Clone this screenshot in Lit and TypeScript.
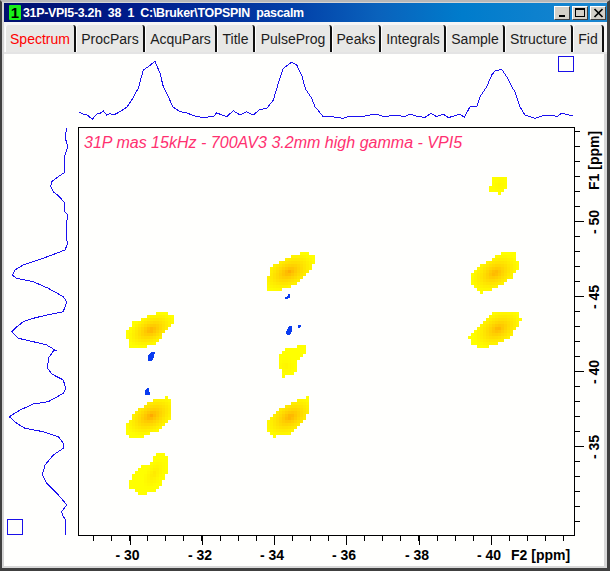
import { LitElement, html, css, svg } from "lit";
import { customElement } from "lit/decorators.js";

const TABS: [string, number][] = [
  ["Spectrum", 71], ["ProcPars", 69], ["AcquPars", 72], ["Title", 38], ["PulseProg", 77],
  ["Peaks", 49], ["Integrals", 65], ["Sample", 59], ["Structure", 68], ["Fid", 31],
];

type P = [number, number];
const z = (pts: number[][], dx: number, dy: number, s = 3) =>
  pts.map(([x, y]) => `${(x / s + dx).toFixed(1)},${(y / s + dy).toFixed(1)}`).join(" ");

const TOP =
  z([[237,337],[250,342],[262,345],[277,358],[290,342],[300,340],[310,333],[320,345],[330,340],[340,345],[355,338],[380,322],[395,300],[415,265],[430,210],[445,200],[465,184],[480,220],[490,260],[505,290],[518,320],[540,335],[560,338],[575,345],[590,350],[610,352],[640,350],[650,338],[665,345],[680,350],[700,332],[720,345],[740,335],[760,345],[780,328],[800,326],[820,300],[835,250],[850,205],[875,186],[890,195],[905,225],[915,262]], 0, 0) +
  " " +
  z([[0,265],[20,295],[30,320],[55,350],[80,350],[115,355],[130,350],[160,350],[180,348],[210,342],[240,350],[270,345],[300,350],[315,342],[340,350],[360,352],[378,340],[395,350],[415,342],[430,353],[465,342],[478,352],[495,320],[515,320],[525,290],[545,260],[560,225],[570,213],[590,208],[605,230],[620,260],[630,275],[645,320],[660,345],[690,355],[715,347],[740,345],[755,350],[770,340],[805,348]], 305, 0);

const LEFT =
  z([[200,10],[195,35],[203,65],[195,90],[193,143],[175,155],[155,170],[152,185],[160,200],[175,212],[193,232],[195,260],[203,270],[200,290],[200,345],[203,355],[195,375],[150,392],[115,405],[70,420],[45,435],[37,450],[50,460],[100,470],[145,490],[190,515],[200,530],[190,560],[140,570],[100,580],[70,590],[45,610],[35,620],[55,640],[100,650],[140,660],[165,675]], 0, 125) +
  " " +
  z([[162,0],[145,25],[143,55],[155,72],[190,90],[197,115],[190,130],[145,155],[100,162],[60,180],[28,200],[50,220],[75,235],[130,245],[175,260],[190,280],[190,295],[160,315],[135,345],[127,375],[140,400],[180,440],[200,465],[185,485],[190,500],[197,510],[197,555]], 0, 350);

interface Blob { pts: P[]; c: P; rx: number; ry: number; rot: number; peak: number; }
const BLOBS: Blob[] = [
  { pts: [[127,332],[133,322],[147,317],[160,312],[166,312],[175,318],[173,324],[163,335],[157,343],[143,348],[128,347]], c: [151,330], rx: 25, ry: 15, rot: -25, peak: 165 },
  { pts: [[125,426],[137,410],[152,401],[167,397],[171,400],[171,417],[160,430],[143,437],[128,437]], c: [151,416], rx: 27, ry: 17, rot: -30, peak: 160 },
  { pts: [[129,483],[132,476],[142,465],[147,467],[157,453],[169,455],[168,473],[157,490],[142,495],[130,488]], c: [154,474], rx: 17, ry: 9, rot: -60, peak: 228 },
  { pts: [[267,278],[273,265],[293,255],[305,252],[315,256],[312,270],[300,282],[282,290],[268,292]], c: [289,272], rx: 28, ry: 17, rot: -25, peak: 165 },
  { pts: [[280,355],[283,350],[295,347],[305,345],[305,352],[297,362],[295,375],[282,377],[280,367]], c: [286,366], rx: 9, ry: 9, rot: 0, peak: 240 },
  { pts: [[267,423],[275,412],[293,402],[309,397],[310,410],[303,423],[293,433],[273,437],[267,430]], c: [290,417], rx: 27, ry: 17, rot: -30, peak: 165 },
  { pts: [[489,192],[493,178],[507,177],[508,187],[500,194]], c: [500,185], rx: 9, ry: 9, rot: 0, peak: 245 },
  { pts: [[470,275],[480,265],[503,253],[515,253],[519,267],[513,277],[497,287],[482,293],[477,288],[470,282]], c: [495,273], rx: 26, ry: 17, rot: -28, peak: 170 },
  { pts: [[469,336],[480,325],[493,312],[517,312],[521,320],[510,338],[488,347],[477,347],[470,343]], c: [498,329], rx: 26, ry: 17, rot: -28, peak: 170 },
];

const inside = (x: number, y: number, pts: P[]) => {
  let r = false;
  for (let i = 0, j = pts.length - 1; i < pts.length; j = i++) {
    const [xi, yi] = pts[i], [xj, yj] = pts[j];
    if (yi > y !== yj > y && x < ((xj - xi) * (y - yi)) / (yj - yi) + xi) r = !r;
  }
  return r;
};

const CELL = 3;
const cells = (b: Blob) => {
  const xs = b.pts.map((p) => p[0]), ys = b.pts.map((p) => p[1]);
  const out: { x: number; y: number; g: number }[] = [];
  const a = (b.rot * Math.PI) / 180;
  for (let y = Math.floor(Math.min(...ys) / CELL) * CELL; y < Math.max(...ys); y += CELL) {
    for (let x = Math.floor(Math.min(...xs) / CELL) * CELL; x < Math.max(...xs); x += CELL) {
      const cx = x + CELL / 2, cy = y + CELL / 2;
      if (!inside(cx, cy, b.pts)) continue;
      const dx = cx - b.c[0], dy = cy - b.c[1];
      const u = dx * Math.cos(a) + dy * Math.sin(a);
      const v = -dx * Math.sin(a) + dy * Math.cos(a);
      const t = Math.min(1, Math.hypot(u / b.rx, v / b.ry));
      out.push({ x, y, g: Math.round(b.peak + (255 - b.peak) * Math.pow(t, 0.65)) });
    }
  }
  return out;
};

const BLUE: P[][] = [
  [[148,356],[151,352],[155,352],[154,357],[152,361],[148,361]],
  [[145,390],[147,388],[149,388],[150,395],[145,395]],
  [[285,297],[288,296],[288,294],[290,294],[290,298],[285,299]],
  [[286,332],[289,326],[292,326],[292,331],[290,335],[287,335]],
  [[298,325],[301,325],[301,326],[300,328],[298,328]],
];

const range = (a: number, b: number, s: number) => {
  const r: number[] = [];
  for (let v = a; v <= b + 0.01; v += s) r.push(v);
  return r;
};

@customElement("app-root")
export class AppRoot extends LitElement {
  static styles = css`
    :host { display: block; width: 610px; height: 571px; overflow: hidden; background: #d4d0c8; }
    .window {
      box-sizing: border-box; width: 610px; height: 571px;
      display: flex; flex-direction: column;
      border-style: solid; border-color: #b8b8b8 #404040 #404040 #404040;
      border-width: 2px 3px 3px 2px;
      background: #d4d4d4;
      font-family: "Liberation Sans", Arial, sans-serif;
    }
    .title {
      margin: 1px 0 0 2px; height: 19px; flex: none;
      display: flex; align-items: center; gap: 2px;
      background: linear-gradient(90deg, #00106e 0%, #001c8c 22%, #0240a8 48%, #0a62bc 62%, #007ccc 76%, #1a86d0 100%);
      color: #fff; font-weight: bold; font-size: 12.4px; white-space: pre;
    }
    .badge {
      width: 12px; height: 15px; margin-left: 5px; background: #18f018; color: #000;
      font-size: 15px; display: flex; align-items: center; justify-content: center; border-radius: 1px;
    }
    .title-text { flex: 1; letter-spacing: -0.27px; }
    .btns { display: flex; gap: 2px; margin-right: 1px; }
    .btn {
      box-sizing: border-box; width: 16px; height: 14px; background: #d4d0c8;
      border: 1px solid; border-color: #fff #404040 #404040 #fff;
      display: flex; align-items: center; justify-content: center;
    }
    .btn svg { display: block; }
    .tabs { display: flex; height: 30px; flex: none; margin-left: 2px; padding: 3px 0 0 1px; box-sizing: border-box; background: #f6f6f6; }
    .tab {
      box-sizing: border-box; height: 27px; background: #e8e8e6; color: #1c1c1c;
      border-right: 2px solid #101010; border-left: 1px solid #fff;
      border-radius: 3px 3px 0 0;
      font-size: 14px; display: flex; align-items: center; justify-content: center; flex: none;
    }
    .tab.active { color: #ff0000; }
    .rule { height: 2px; flex: none; margin-left: 2px; background: #e4e4e4; }
    .canvas { flex: 1; margin-left: 2px; background: #fffffd; min-height: 0; border-right: 3px solid #d8d8d8; border-bottom: 2px solid #d8d8d8; position: relative; overflow: hidden; }
    .plot { position: absolute; left: -4px; top: -54px; display: block; }
    .lab { font-family: "Liberation Sans", Arial, sans-serif; font-weight: bold; font-size: 14px; fill: #000; }
    .cap { font-family: "Liberation Sans", Arial, sans-serif; font-style: italic; font-size: 16.05px; fill: #ff3070; }
  `;

  render() {
    return html`<div class="window">
      <div class="title">
        <span class="badge">1</span>
        <span class="title-text">31P-VPI5-3.2h  38  1  C:\\Bruker\\TOPSPIN  pascalm</span>
        <div class="btns">
          <div class="btn"><svg width="10" height="10"><rect x="2" y="7" width="6" height="2" fill="#000"/></svg></div>
          <div class="btn"><svg width="12" height="11"><rect x="1.5" y="1.5" width="9" height="8" fill="none" stroke="#000"/><rect x="1" y="1" width="10" height="2" fill="#000"/></svg></div>
          <div class="btn"><svg width="11" height="10"><path d="M1.5 1 L9.5 9 M9.5 1 L1.5 9" stroke="#000" stroke-width="1.7"/></svg></div>
        </div>
      </div>
      <div class="tabs">
        ${TABS.map(([t, w], i) => html`<div class="tab ${i === 0 ? "active" : ""}" style="width:${w}px">${t}</div>`)}
      </div>
      <div class="rule"></div>
      <div class="canvas">${this.plot()}</div>
    </div>`;
  }

  plot() {
    const x0 = 78.5, x1 = 574.5, y0 = 127.5, y1 = 535.5;
    const bx = range(93, 580, 18.08);
    const majorX: [number, string][] = [[129.5,"- 30"],[202,"- 32"],[274,"- 34"],[346,"- 36"],[419,"- 38"],[491,"- 40"]];
    const ry = range(131, 521, 15);
    const majorY: [number, string][] = [[221,"- 50"],[296,"- 45"],[371,"- 40"],[446,"- 35"]];
    return html`<svg class="plot" width="610" height="571" viewBox="0 0 610 571">
      ${svg`<rect x="${x0}" y="${y0}" width="${x1 - x0}" height="${y1 - y0}" fill="#fffffd" stroke="#000" stroke-width="1"/>`}
      <g shape-rendering="crispEdges">
      ${BLOBS.map((b) => cells(b).map((c) => svg`<rect x="${c.x}" y="${c.y}" width="${CELL}" height="${CELL}" fill="rgb(255,${c.g},0)"/>`))}
      ${BLUE.map((p) => svg`<polygon points="${p.map((q) => q.join(",")).join(" ")}" fill="#0a3cf0"/>`)}
      </g>
      <polyline points="${TOP}" fill="none" stroke="#1a10f0" stroke-width="1" shape-rendering="crispEdges"/>
      <polyline points="${LEFT}" fill="none" stroke="#1a10f0" stroke-width="1" shape-rendering="crispEdges"/>
      <rect x="558.5" y="56.5" width="15" height="15" fill="none" stroke="#1a10e8" stroke-width="1"/>
      <rect x="7.5" y="519.5" width="15" height="15" fill="none" stroke="#1a10e8" stroke-width="1"/>
      ${bx.map((x) => svg`<line x1="${Math.round(x) + 0.5}" x2="${Math.round(x) + 0.5}" y1="535" y2="541" stroke="#000"/>`)}
      ${majorX.map(([x]) => svg`<line x1="${Math.round(x) + 0.5}" x2="${Math.round(x) + 0.5}" y1="535" y2="545" stroke="#000"/>`)}
      ${ry.map((y) => svg`<line x1="574" x2="580" y1="${y + 0.5}" y2="${y + 0.5}" stroke="#000"/>`)}
      ${majorY.map(([y]) => svg`<line x1="574" x2="584" y1="${y + 0.5}" y2="${y + 0.5}" stroke="#000"/>`)}
      ${majorX.map(([x, t]) => svg`<text class="lab" x="${x - 2}" y="560" text-anchor="middle">${t}</text>`)}
      <text class="lab" x="511" y="560">F2 [ppm]</text>
      ${majorY.map(([y, t]) => svg`<text class="lab" transform="translate(599 ${y + 1}) rotate(-90)" text-anchor="middle">${t}</text>`)}
      <text class="lab" transform="translate(599 190) rotate(-90)">F1 [ppm]</text>
      <text class="cap" x="84" y="148">31P mas 15kHz - 700AV3 3.2mm high gamma - VPI5</text>
    </svg>`;
  }
}
